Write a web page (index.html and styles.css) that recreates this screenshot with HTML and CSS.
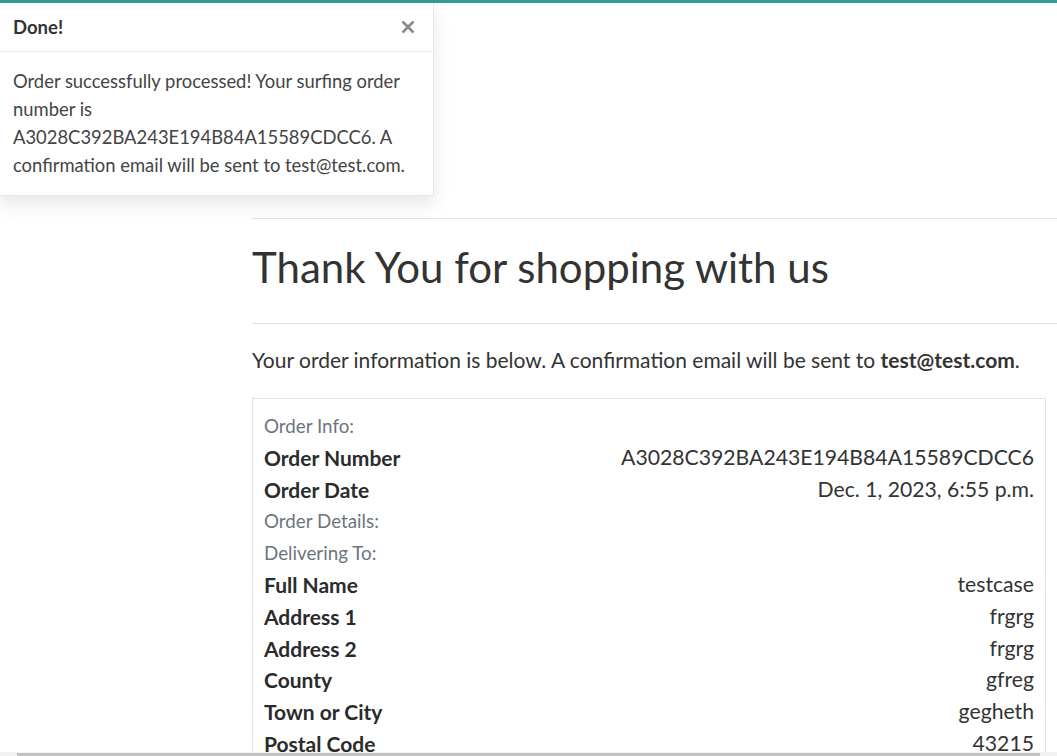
FILE: index.html
```html
<!DOCTYPE html>
<html lang="en">
<head>
<meta charset="utf-8">
<title>Thank You</title>
<link rel="stylesheet" href="styles.css">
</head>
<body>
<div class="topbar"></div>

<div class="toast">
  <div class="toast-header">
    <strong class="toast-title">Done!</strong>
    <button class="toast-close" aria-label="Close">
      <svg width="14" height="14" viewBox="0 0 14 14"><path d="M1.5 1.5L12.5 12.5M12.5 1.5L1.5 12.5" stroke="#8a8a8a" stroke-width="2.6" stroke-linecap="butt"/></svg>
    </button>
  </div>
  <div class="toast-body">Order successfully processed! Your surfing order number is A3028C392BA243E194B84A15589CDCC6. A confirmation email will be sent to test@test.com.</div>
</div>

<main class="main">
  <hr class="rule">
  <h1 class="title">Thank You for shopping with us</h1>
  <hr class="rule">
  <p class="lead">Your order information is below. A confirmation email will be sent to <strong>test@test.com</strong>.</p>

  <div class="card">
    <div class="row muted">Order Info:</div>
    <div class="row"><span class="label">Order Number</span><span class="value">A3028C392BA243E194B84A15589CDCC6</span></div>
    <div class="row"><span class="label">Order Date</span><span class="value">Dec. 1, 2023, 6:55 p.m.</span></div>
    <div class="row muted">Order Details:</div>
    <div class="row muted">Delivering To:</div>
    <div class="row"><span class="label">Full Name</span><span class="value">testcase</span></div>
    <div class="row"><span class="label">Address 1</span><span class="value">frgrg</span></div>
    <div class="row"><span class="label">Address 2</span><span class="value">frgrg</span></div>
    <div class="row"><span class="label">County</span><span class="value">gfreg</span></div>
    <div class="row"><span class="label">Town or City</span><span class="value">gegheth</span></div>
    <div class="row"><span class="label">Postal Code</span><span class="value">43215</span></div>
  </div>
</main>

<div class="hscroll"><div class="hscroll-thumb"></div></div>
</body>
</html>
```

FILE: styles.css
```css
html, body {
  margin: 0;
  padding: 0;
  height: 100%;
  overflow: hidden;
}
body {
  font-family: Lato, "Open Sans", "Liberation Sans", sans-serif;
  color: #333;
  background: #fff;
}
.topbar {
  height: 3px;
  background: #2f9e97;
}
.toast {
  position: absolute;
  top: 3px;
  left: 0;
  width: 434px;
  box-sizing: border-box;
  background: #fff;
  border: 1px solid #e6e6e6;
  border-top: 0;
  border-left: 0;
  box-shadow: 0 8px 18px rgba(0, 0, 0, 0.10);
  z-index: 10;
}
.toast-header {
  height: 48px;
  display: flex;
  align-items: center;
  justify-content: space-between;
  padding: 0 18px 0 13px;
  border-bottom: 1px solid #ececec;
}
.toast-title {
  font-size: 18.5px;
  font-weight: 700;
  color: #333;
}
.toast-close {
  border: 0;
  background: none;
  padding: 0;
  display: flex;
  cursor: pointer;
}
.toast-body {
  padding: 15px 14px 16px 13px;
  font-size: 18.4px;
  line-height: 28px;
  color: #444;
}
.main {
  padding-top: 215px;
  margin-left: 252px;
}
.rule {
  border: 0;
  border-top: 1px solid #dfe2e6;
  margin: 0;
  height: 0;
}
.title {
  font-size: 42px;
  font-weight: 400;
  line-height: 50px;
  margin: 23px 0 31px;
  color: #333;
}
.lead {
  font-size: 21px;
  line-height: 30px;
  margin: 21px 0 23px;
  color: #333;
}
.lead strong {
  font-weight: 700;
}
.card {
  width: 794px;
  box-sizing: border-box;
  border: 1px solid #dfe2e6;
  padding: 11px 11px;
}
.row {
  display: flex;
  justify-content: space-between;
  align-items: center;
  height: 31.8px;
  line-height: 31.8px;
  font-size: 21px;
  white-space: nowrap;
}
.row.muted {
  font-size: 18.8px;
  color: #6c757d;
}
.label {
  font-weight: 700;
  color: #2b2b2b;
}
.value {
  font-size: 21.2px;
  color: #333;
}
.hscroll {
  position: fixed;
  left: 0;
  right: 0;
  bottom: 0;
  height: 4px;
  background: #f1f1f1;
}
.hscroll-thumb {
  position: absolute;
  left: 17px;
  right: 17px;
  top: 1px;
  bottom: 0;
  background: #c1c1c1;
}
```
